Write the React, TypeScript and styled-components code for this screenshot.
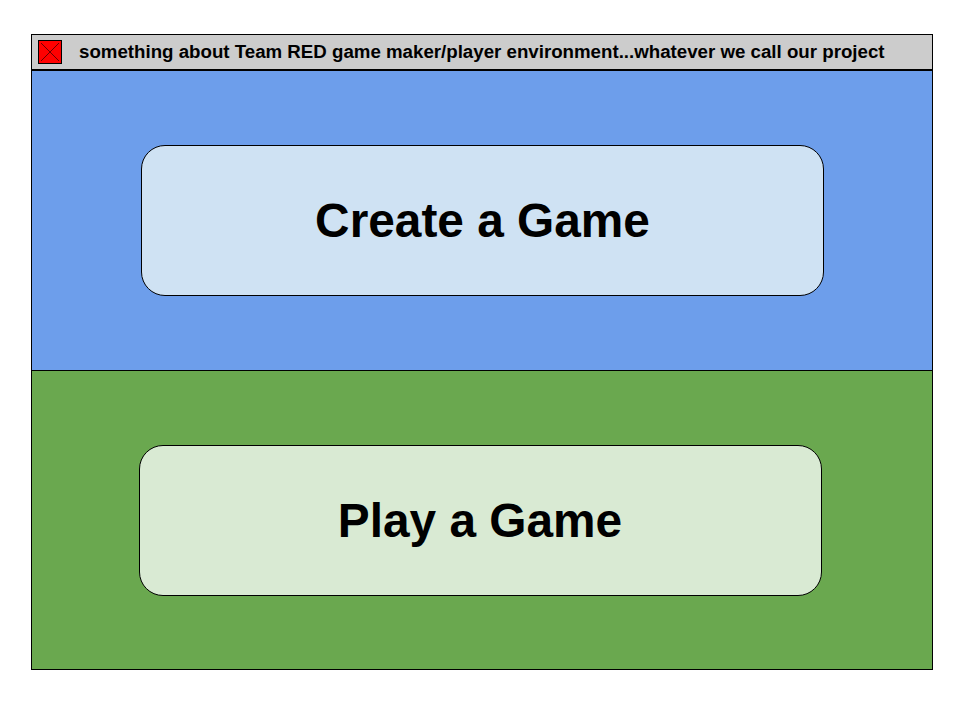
import styled, { createGlobalStyle } from "styled-components";

const GlobalStyle = createGlobalStyle`
  body {
    margin: 0;
    background: #ffffff;
    font-family: "Liberation Sans", Arial, sans-serif;
  }
`;

const Page = styled.div`
  padding: 34px 0 0 31px;
`;

const Frame = styled.div`
  width: 900px;
  border: 1px solid #000;
  display: flex;
  flex-direction: column;
`;

const Header = styled.div`
  height: 34px;
  background: #cccccc;
  border-bottom: 2px solid #000;
  display: flex;
  align-items: center;
  padding-left: 6px;
  gap: 17px;
`;

const Title = styled.span`
  font-weight: bold;
  font-size: 18.7px;
  color: #000;
  white-space: nowrap;
`;

const Section = styled.div<{ $bg: string; $h: number; $shift: number }>`
  height: ${(p) => p.$h}px;
  background: ${(p) => p.$bg};
  display: flex;
  align-items: center;
  justify-content: center;
  padding-left: ${(p) => Math.max(p.$shift, 0)}px;
  padding-right: ${(p) => Math.max(-p.$shift, 0)}px;
  & + & {
    border-top: 1px solid #000;
  }
`;

const GameButton = styled.button<{ $bg: string }>`
  width: 683px;
  height: 151px;
  box-sizing: border-box;
  border: 1px solid #000;
  border-radius: 24px;
  background: ${(p) => p.$bg};
  font-family: "Liberation Sans", Arial, sans-serif;
  font-weight: bold;
  font-size: 47.8px;
  color: #000;
  cursor: pointer;
  padding: 0;
`;

const CloseIcon = () => (
  <svg width="24" height="24" viewBox="0 0 24 24">
    <rect x="0.5" y="0.5" width="23" height="23" fill="#ff0000" stroke="#000" />
    <path d="M3 3L21 21M21 3L3 21" stroke="#400" strokeWidth="0.8" />
  </svg>
);

export default function App() {
  return (
    <>
      <GlobalStyle />
      <Page>
        <Frame>
          <Header>
            <CloseIcon />
            <Title>
              something about Team RED game maker/player environment...whatever
              we call our project
            </Title>
          </Header>
          <Section $bg="#6d9eeb" $h={299} $shift={1}>
            <GameButton $bg="#cfe2f3">Create a Game</GameButton>
          </Section>
          <Section $bg="#6aa84f" $h={298} $shift={-4}>
            <GameButton $bg="#d9ead3">Play a Game</GameButton>
          </Section>
        </Frame>
      </Page>
    </>
  );
}
